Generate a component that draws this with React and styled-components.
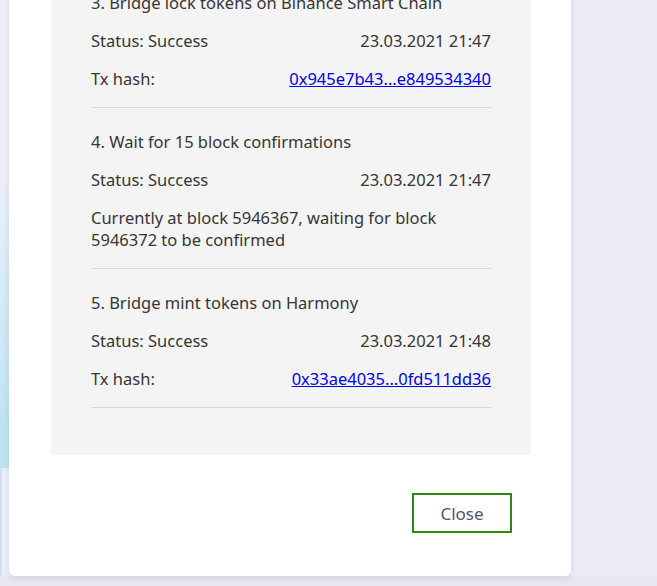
import React from 'react';
import styled, { createGlobalStyle } from 'styled-components';

const GlobalStyle = createGlobalStyle`
    html, body {
        margin: 0;
        padding: 0;
        height: 100%;
        overflow: hidden;
    }
    body {
        font-family: "Noto Sans", Lato, sans-serif;
        background: #ededf7;
    }
`;

// page backdrop, with the bits of the app that peek out behind the modal
const Page = styled.div`
    width: 657px;
    height: 586px;
    position: relative;
    overflow: hidden;
    background:
        linear-gradient(#e7e7ef, #e7e7ef) 0 576px / 100% 10px no-repeat,
        linear-gradient(180deg, #c2e2f0, #b8ddef) 143px 576px / 49px 10px no-repeat,
        linear-gradient(180deg, #e8f0fa 0%, #c0e3f3 100%) 0 190px / 9px 230px no-repeat,
        linear-gradient(#bfe2f2, #bfe2f2) 0 418px / 9px 50px no-repeat,
        linear-gradient(#c5e4f3, #c5e4f3) 0 468px / 2px 118px no-repeat,
        #ededf7;
`;

const Modal = styled.div`
    position: absolute;
    left: 9px;
    bottom: 10px;
    width: 562px;
    background: #ffffff;
    border-radius: 0 0 6px 6px;
    box-shadow: 0 2px 6px rgba(60, 60, 90, 0.12);
    display: flex;
    flex-direction: column;
    padding: 0 0 43px 42px;
    box-sizing: border-box;
`;

const Steps = styled.div`
    width: 480px;
    background: #f4f4f4;
    padding: 0 40px 47px;
    box-sizing: border-box;
`;

const Step = styled.div`
    padding: 23px 0 17px;
    border-bottom: 1px solid #dadada;
    display: flex;
    flex-direction: column;
    gap: 16px;
    color: #363636;
    font-size: 16.5px;
    line-height: 22px;
`;

const Row = styled.div`
    display: flex;
    justify-content: space-between;
    align-items: baseline;
`;

const Hash = styled.a`
    color: #0000ee;
    text-decoration: underline;
`;

const Footer = styled.div`
    display: flex;
    justify-content: flex-end;
    padding: 38px 59px 0 0;
`;

const CloseButton = styled.button`
    width: 100px;
    height: 40px;
    background: #ffffff;
    border: 2px solid #2b8a0f;
    border-radius: 0;
    color: #545474;
    font-family: "Noto Sans", Lato, sans-serif;
    font-size: 17px;
    cursor: pointer;
`;

const steps = [
    {
        title: '3. Bridge lock tokens on Binance Smart Chain',
        date: '23.03.2021 21:47',
        hash: '0x945e7b43...e849534340',
    },
    {
        title: '4. Wait for 15 block confirmations',
        date: '23.03.2021 21:47',
        note: 'Currently at block 5946367, waiting for block 5946372 to be confirmed',
    },
    {
        title: '5. Bridge mint tokens on Harmony',
        date: '23.03.2021 21:48',
        hash: '0x33ae4035...0fd511dd36',
    },
];

export default function App() {
    return (
        <Page>
            <GlobalStyle />
            <Modal>
                <Steps>
                    {steps.map((step) => (
                        <Step key={step.title}>
                            <div>{step.title}</div>
                            <Row>
                                <span>Status: Success</span>
                                <span>{step.date}</span>
                            </Row>
                            {step.hash && (
                                <Row>
                                    <span>Tx hash:</span>
                                    <Hash href="#">{step.hash}</Hash>
                                </Row>
                            )}
                            {step.note && <div>{step.note}</div>}
                        </Step>
                    ))}
                </Steps>
                <Footer>
                    <CloseButton>Close</CloseButton>
                </Footer>
            </Modal>
        </Page>
    );
}
